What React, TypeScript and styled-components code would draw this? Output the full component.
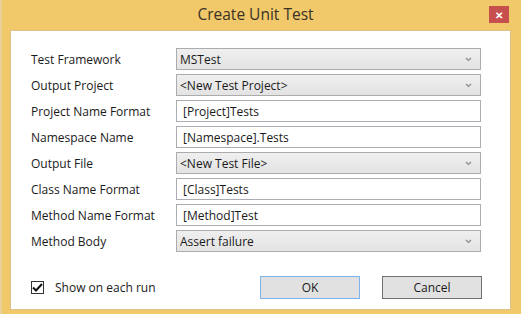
import React from 'react';
import styled, { createGlobalStyle } from 'styled-components';

const GlobalStyle = createGlobalStyle`
  html, body {
    margin: 0;
    padding: 0;
    background: #f0c868;
  }
  body {
    font-family: "Open Sans", "Noto Sans", sans-serif;
  }
`;

const Window = styled.div`
  width: 521px;
  height: 314px;
  box-sizing: border-box;
  display: flex;
  flex-direction: column;
  background: #f1c86a;
  border-left: 2px solid #e9cf98;
`;

const TitleBar = styled.div`
  height: 30px;
  display: grid;
  grid-template-columns: 1fr auto 1fr;
  align-items: center;
  padding-right: 12px;
`;

const Title = styled.div`
  grid-column: 2;
  font-size: 15.5px;
  color: #3a3226;
  margin-top: -2px;
`;

const CloseButton = styled.div`
  grid-column: 3;
  justify-self: end;
  align-self: start;
  margin-top: 6px;
  width: 20px;
  height: 17px;
  background: #c7504f;
  color: #fff;
  font-size: 10px;
  font-weight: 700;
  display: flex;
  align-items: center;
  justify-content: center;
  line-height: 1;
`;

const Client = styled.div`
  flex: 1;
  margin: 0 10px 4px 8px;
  background: #fff;
  border: 1px solid #dcc28a;
  padding: 17px 28px 0 20px;
  display: flex;
  flex-direction: column;
`;

const Form = styled.div`
  display: grid;
  grid-template-columns: 145px 305px;
  grid-auto-rows: 22px;
  row-gap: 4px;
`;

const Label = styled.div`
  font-size: 12px;
  color: #1a1a1a;
  display: flex;
  align-items: center;
`;

const Field = styled.div<{ $combo?: boolean }>`
  box-sizing: border-box;
  height: 22px;
  border: 1px solid ${p => (p.$combo ? '#acacac' : '#abadb3')};
  background: ${p => (p.$combo ? 'linear-gradient(#efefef, #e3e3e3)' : '#fff')};
  display: flex;
  align-items: center;
  padding: 0 8px 0 ${p => (p.$combo ? '3px' : '6px')};
  font-size: 12px;
  color: #1a1a1a;
`;

const FieldText = styled.span`
  flex: 1;
  white-space: nowrap;
`;

const Footer = styled.div`
  margin-top: 24px;
  display: flex;
  align-items: center;
`;

const CheckRow = styled.label`
  display: flex;
  align-items: center;
  gap: 11px;
  font-size: 12px;
  color: #1a1a1a;
  flex: 1;
`;

const CheckBox = styled.span`
  width: 13px;
  height: 13px;
  box-sizing: border-box;
  border: 1px solid #333;
  background: #fff;
  display: flex;
  align-items: center;
  justify-content: center;
`;

const Buttons = styled.div`
  display: flex;
  gap: 22px;
`;

const Button = styled.button<{ $default?: boolean }>`
  width: 100px;
  height: 23px;
  box-sizing: border-box;
  border: 1px solid ${p => (p.$default ? '#7eb4ea' : '#707070')};
  background: #e1e1e1;
  font-family: inherit;
  font-size: 12px;
  color: #1a1a1a;
  padding: 0;
`;

const Chevron = () => (
  <svg width="7" height="5" viewBox="0 0 7 5">
    <path d="M1 1 L3.5 3.5 L6 1" fill="none" stroke="#8a8a8a" strokeWidth="1.2" />
  </svg>
);

const rows: { label: string; value: string; combo?: boolean }[] = [
  { label: 'Test Framework', value: 'MSTest', combo: true },
  { label: 'Output Project', value: '<New Test Project>', combo: true },
  { label: 'Project Name Format', value: '[Project]Tests' },
  { label: 'Namespace Name', value: '[Namespace].Tests' },
  { label: 'Output File', value: '<New Test File>', combo: true },
  { label: 'Class Name Format', value: '[Class]Tests' },
  { label: 'Method Name Format', value: '[Method]Test' },
  { label: 'Method Body', value: 'Assert failure', combo: true },
];

const App: React.FC = () => {
  return (
    <>
      <GlobalStyle />
      <Window>
        <TitleBar>
          <Title>Create Unit Test</Title>
          <CloseButton>✕</CloseButton>
        </TitleBar>
        <Client>
          <Form>
            {rows.map(r => (
              <React.Fragment key={r.label}>
                <Label>{r.label}</Label>
                <Field $combo={r.combo}>
                  <FieldText>{r.value}</FieldText>
                  {r.combo && <Chevron />}
                </Field>
              </React.Fragment>
            ))}
          </Form>
          <Footer>
            <CheckRow>
              <CheckBox>
                <svg width="11" height="9" viewBox="0 0 11 9">
                  <path d="M1 4.5 L4 7.5 L10 1" fill="none" stroke="#111" strokeWidth="2" />
                </svg>
              </CheckBox>
              Show on each run
            </CheckRow>
            <Buttons>
              <Button $default>OK</Button>
              <Button>Cancel</Button>
            </Buttons>
          </Footer>
        </Client>
      </Window>
    </>
  );
};

export default App;
